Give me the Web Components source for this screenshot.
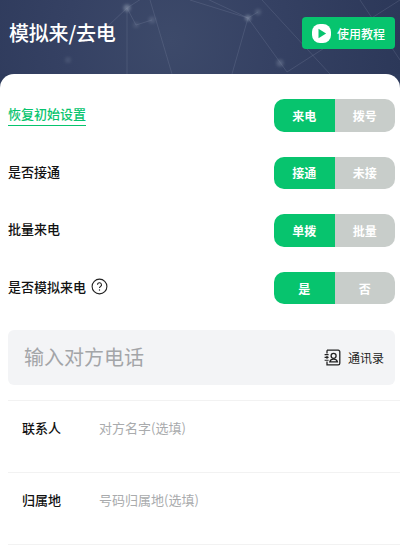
<!DOCTYPE html>
<html lang="zh">
<head>
<meta charset="utf-8">
<title>模拟来/去电</title>
<style>
  html, body { margin: 0; padding: 0; background: #fff; }
  body { width: 400px; height: 550px; overflow: hidden; font-family: "Noto Sans CJK SC", "Liberation Sans", sans-serif; }
</style>
</head>
<body>
<call-page>
  <call-header slot="header" heading="模拟来/去电" action="使用教程"></call-header>
  <setting-row active="来电" other="拨号"><a-link>恢复初始设置</a-link></setting-row>
  <setting-row active="接通" other="未接">是否接通</setting-row>
  <setting-row active="单拨" other="批量">批量来电</setting-row>
  <setting-row active="是" other="否" help>是否模拟来电</setting-row>
  <phone-input placeholder="输入对方电话" contacts="通讯录"></phone-input>
  <field-row label="联系人" placeholder="对方名字(选填)"></field-row>
  <field-row label="归属地" placeholder="号码归属地(选填)"></field-row>
</call-page>
<script>
class CallPage extends HTMLElement {
  constructor() {
    super();
    this.attachShadow({ mode: "open" }).innerHTML = `
      <style>
        :host { display: block; width: 400px; height: 550px; overflow: hidden; background: #2e3b5c; }
        .sheet { background: #fff; border-radius: 14px 14px 0 0; padding: 25px 0 0 8px; height: 476px; box-sizing: border-box; }
      </style>
      <slot name="header"></slot>
      <div class="sheet"><slot></slot></div>`;
  }
}
class CallHeader extends HTMLElement {
  constructor() {
    super();
    this.attachShadow({ mode: "open" }).innerHTML = `
      <style>
        :host { display: block; height: 74px; position: relative; overflow: hidden; background: radial-gradient(circle at 170px 40px, #3d4a6a 0, #354163 45%, #2c3859 100%); }
        svg.bg { position: absolute; left: 0; top: 0; }
        .bar { position: relative; height: 66px; display: flex; align-items: center; justify-content: space-between; padding: 0 5px 0 9px; box-sizing: border-box; }
        h1 { margin: 0 0 1px; font-size: 20px; font-weight: 500; color: #fff; line-height: 1; letter-spacing: -.2px; }
        .btn { width: 93px; height: 32px; box-sizing: border-box; background: #07c46e; border-radius: 4px; display: flex; align-items: center; padding-left: 10px; gap: 6px; color: #fff; font-size: 12px; font-weight: 500; }
      </style>
      <svg class="bg" width="400" height="74" viewBox="0 0 400 74" fill="none">
        <defs><filter id="soft" x="-100%" y="-100%" width="300%" height="300%"><feGaussianBlur stdDeviation="1.6"/></filter></defs>
        <g stroke="#8a95ad" stroke-opacity=".32" stroke-width=".7">
          <path d="M127 8L141 -1M127 8L127 74M127 8L108 26M150 0L172 74M190 0L248 18L287 72M248 18L232 74M248 18L258 12M248 18L205 -2M287 72L340 38L400 0M262 0L330 74M360 0L400 60M136 25L127 8M152 20L136 25"/>
        </g>
        <g fill="#8c97ae" filter="url(#soft)">
          <circle cx="127" cy="8" r="3.5" fill-opacity=".6"/>
          <circle cx="248" cy="18" r="3" fill-opacity=".6"/>
          <circle cx="258" cy="12" r="3" fill-opacity=".3"/>
          <circle cx="152" cy="20" r="3.5" fill-opacity=".25"/>
          <circle cx="136" cy="25" r="3" fill-opacity=".2"/>
          <circle cx="68" cy="60" r="3" fill-opacity=".2"/>
          <circle cx="280" cy="63" r="3.5" fill-opacity=".35"/>
        </g>
      </svg>
      <div class="bar">
        <h1>${this.getAttribute("heading")}</h1>
        <div class="btn">
          <svg width="19" height="19" viewBox="0 0 19 19"><rect width="19" height="19" rx="8" fill="#fff"/><path d="M6.5 4.8v9.4l7.6-4.7z" fill="#07c46e"/></svg>
          <span>${this.getAttribute("action")}</span>
        </div>
      </div>`;
  }
}
class ALink extends HTMLElement {
  constructor() {
    super();
    this.attachShadow({ mode: "open" }).innerHTML = `
      <style>:host { display: inline-block; margin-top: 3px; color: #07c46e; border-bottom: 1px solid #07c46e; line-height: 18px; padding-bottom: 2px; }</style>
      <slot></slot>`;
  }
}
class SettingRow extends HTMLElement {
  constructor() {
    super();
    const help = this.hasAttribute("help") ? `
      <svg class="help" width="17" height="17" viewBox="0 0 17 17" fill="none"><circle cx="8.5" cy="8.5" r="7.4" stroke="#222" stroke-width="1.1"/><path d="M6.5 6.8a2 2 0 1 1 3 1.7c-.7.4-1 .8-1 1.6" stroke="#222" stroke-width="1.1"/><circle cx="8.5" cy="12" r=".7" fill="#222"/></svg>` : "";
    this.attachShadow({ mode: "open" }).innerHTML = `
      <style>
        :host { display: flex; height: 57.67px; align-items: flex-start; justify-content: space-between; padding-right: 5px; font-size: 13px; font-weight: 500; color: #111; }
        .label { display: flex; align-items: center; gap: 5px; height: 29px; }
        .seg { display: flex; width: 121px; height: 32.5px; border-radius: 10px; overflow: hidden; color: #fff; font-size: 12px; font-weight: 700; }
        .seg span { display: flex; align-items: center; justify-content: center; }
        .on { background: #07c46e; width: 60.5px; }
        .off { background: #c8cdca; flex: 1; }
      </style>
      <div class="label"><slot></slot>${help}</div>
      <div class="seg"><span class="on">${this.getAttribute("active")}</span><span class="off">${this.getAttribute("other")}</span></div>`;
  }
}
class PhoneInput extends HTMLElement {
  constructor() {
    super();
    this.attachShadow({ mode: "open" }).innerHTML = `
      <style>
        :host { display: flex; align-items: center; justify-content: space-between; width: 387px; height: 55px; margin: 0 0 15px; box-sizing: border-box; background: #f3f4f6; border-radius: 6px; padding: 0 11px 0 16px; }
        .ph { font-size: 20px; color: #a3a5a8; padding-bottom: 2px; }
        .c { display: flex; align-items: center; gap: 7px; font-size: 12px; color: #222; }
      </style>
      <span class="ph">${this.getAttribute("placeholder")}</span>
      <span class="c">
        <svg width="17" height="17" viewBox="0 0 17 17" fill="none" stroke="#222" stroke-width="1.3">
          <path d="M3 1.2h11.2a1.6 1.6 0 0 1 1.6 1.6v11.4a1.6 1.6 0 0 1-1.6 1.6H3V12.5M3 9.8V7M3 4.4V1.2"/>
          <path d="M.6 5.6h4M.6 8.4h4M.6 11.2h4" stroke-width="1.1"/>
          <circle cx="9.6" cy="6.8" r="2.5"/>
          <path d="M5.8 12.8c.5-1.9 2-2.7 3.8-2.7s3.3.8 3.8 2.7z"/>
        </svg>
        <span>${this.getAttribute("contacts")}</span>
      </span>`;
  }
}
class FieldRow extends HTMLElement {
  constructor() {
    super();
    this.attachShadow({ mode: "open" }).innerHTML = `
      <style>
        :host { display: flex; align-items: flex-start; height: 72px; box-sizing: border-box; border-top: 1px solid #f2f2f2; padding: 18px 0 0 14px; font-size: 13px; }
        :host(:last-of-type) { border-bottom: 1px solid #f2f2f2; height: 73px; }
        b { width: 77px; font-weight: 500; color: #111; line-height: 18px; }
        span { color: #a9abad; line-height: 18px; }
      </style>
      <b>${this.getAttribute("label")}</b><span>${this.getAttribute("placeholder")}</span>`;
  }
}
customElements.define("call-page", CallPage);
customElements.define("call-header", CallHeader);
customElements.define("a-link", ALink);
customElements.define("setting-row", SettingRow);
customElements.define("phone-input", PhoneInput);
customElements.define("field-row", FieldRow);
</script>
</body>
</html>
